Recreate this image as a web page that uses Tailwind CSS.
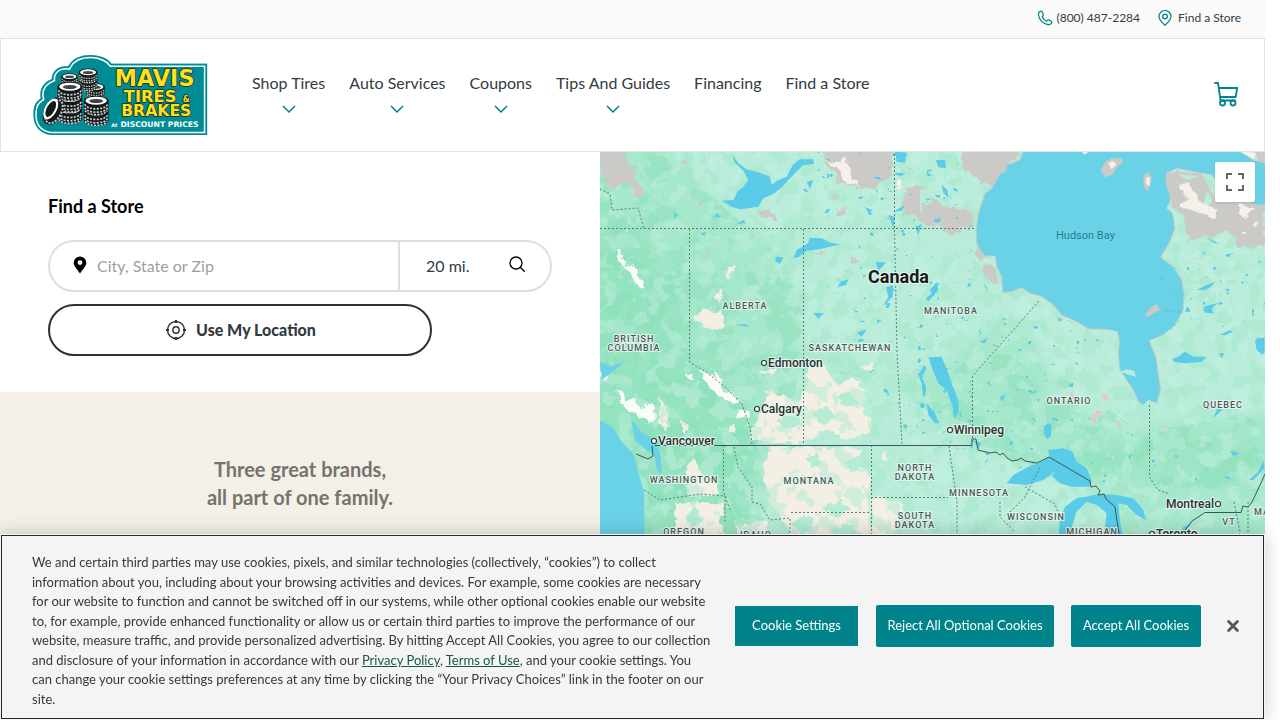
<!DOCTYPE html>
<html lang="en">
<head>
    <meta charset="UTF-8">
    <meta name="viewport" content="width=device-width, initial-scale=1.0">
    <title>Find a Store | Mavis Tires &amp; Brakes</title>
    <script src="https://cdn.jsdelivr.net/npm/@tailwindcss/browser@4"></script>
</head>
<body class="h-screen overflow-hidden bg-white pr-[15px] font-['Lato',sans-serif] text-[#333a40]">
    <div class="flex h-screen flex-col">
        <!-- Top bar -->
        <div class="flex h-[38px] shrink-0 items-center justify-end gap-4 bg-[#fafafa] pr-6 pb-0.5 text-xs">
            <a href="tel:8004872284" class="flex items-center gap-1">
                <svg class="size-4" viewBox="0 0 16 16" fill="none" stroke="#00838a" stroke-width="1.2" stroke-linejoin="round"><path d="M3.6 1.3C2 1.8 1.3 3.2 1.5 5c.6 4.8 4.7 9 9.5 9.6 1.9.2 3.4-.8 3.8-2.3.1-.5-.1-.9-.5-1.1l-2.5-1.3c-.4-.2-.8-.1-1.100.2l-1 1.100c-2.100-.8-3.700-2.500-4.600-4.600l1-.9c.3-.3.4-.7.2-1.100L5 1.700c-.3-.5-.8-.6-1.400-.4z"/></svg>
                (800) 487-2284
            </a>
            <a href="#" class="flex items-center gap-1">
                <svg class="h-4 w-[18px]" viewBox="0 0 18 16" fill="none" stroke="#00838a" stroke-width="1.2"><path d="M9 15.300C6.300 12.600 3 10 3 6.500a6 6 0 0 1 12 0c0 3.500-3.300 6.100-6 8.800z"/><circle cx="9" cy="6.500" r="2.400"/></svg>
                Find a Store
            </a>
        </div>

        <!-- Header -->
        <header class="flex h-[114px] shrink-0 items-center border border-[#e2e2e2] bg-white pr-6 pl-8">
            <a href="#" class="shrink-0">
                <svg class="h-20 w-[175px]" viewBox="99 56 524 240" role="img" aria-label="Mavis Tires and Brakes at discount prices">
                    <defs>
                        <path id="badge" d="M334 82H621V296H150C115 290 98 265 100 230C100 205 110 195 122 186C116 160 130 138 155 128C155 105 175 86 204 90C217 65 245 56 270 56C300 56 325 68 334 82Z"/>
                        <clipPath id="badge-clip"><use href="#badge"/></clipPath>
                        <g id="tire">
                            <path d="M0 10V40C0 62 74 62 74 40V10Z" fill="#16191a"/>
                            <path d="M3 24C8 42 66 42 71 24M3 34C8 52 66 52 71 34M4 43C12 59 62 59 70 43" fill="none" stroke="#c9d2d2" stroke-width="5" stroke-dasharray="6 4"/>
                            <ellipse cx="37" cy="13" rx="37" ry="15" fill="#16191a"/>
                            <ellipse cx="37" cy="13" rx="32" ry="12" fill="#fff"/>
                            <ellipse cx="37" cy="14" rx="21" ry="6" fill="#3d4445"/>
                        </g>
                    </defs>
                    <use href="#badge" fill="#008c95"/>
                    <g clip-path="url(#badge-clip)" fill="none">
                        <use href="#badge" stroke="#fff" stroke-width="20"/>
                        <use href="#badge" stroke="#008c95" stroke-width="11"/>
                    </g>
                    <use href="#tire" transform="translate(258 142) scale(.75)"/>
                    <use href="#tire" transform="translate(236 122) scale(.75)"/>
                    <use href="#tire" transform="translate(236 98) scale(.75)"/>
                    <use href="#tire" transform="translate(184 112) scale(.65)"/>
                    <use href="#tire" transform="translate(172 206)"/>
                    <use href="#tire" transform="translate(172 172)"/>
                    <use href="#tire" transform="translate(172 138)"/>
                    <use href="#tire" transform="translate(251 212)"/>
                    <use href="#tire" transform="translate(251 180)"/>
                    <g transform="rotate(28 157 223)">
                        <ellipse cx="160" cy="223" rx="28" ry="44" fill="#16191a"/>
                        <ellipse cx="162" cy="223" rx="22" ry="38" fill="none" stroke="#c9d2d2" stroke-width="6" stroke-dasharray="6 4"/>
                        <ellipse cx="150" cy="221" rx="18" ry="34" fill="#fff"/>
                        <ellipse cx="150" cy="221" rx="12" ry="26" fill="#16191a"/>
                    </g>
                    <g class="font-['DejaVu_Sans',sans-serif] font-bold" fill="#ffe01a" stroke="#16301f" stroke-width="5" stroke-linejoin="round" paint-order="stroke">
                        <text x="344" y="150" font-size="67">MAVIS</text>
                        <text x="371" y="196" font-size="49">TIRES</text>
                        <text x="548" y="196" font-size="24">&amp;</text>
                        <text x="363" y="240" font-size="47">BRAKES</text>
                    </g>
                    <g class="font-['DejaVu_Sans',sans-serif] font-bold" fill="#fff">
                        <text x="333" y="272" font-size="15">At</text>
                        <text x="361" y="273" font-size="23">DISCOUNT PRICES</text>
                    </g>
                </svg>
            </a>
            <nav class="mb-1 ml-11 flex gap-6 text-base">
                <a href="#" class="flex flex-col items-center gap-2">Shop Tires
                    <svg class="h-3 w-4" viewBox="0 0 16 12" fill="none" stroke="#00838a" stroke-width="1.5"><path d="M2 3l6 6 6-6"/></svg></a>
                <a href="#" class="flex flex-col items-center gap-2">Auto Services
                    <svg class="h-3 w-4" viewBox="0 0 16 12" fill="none" stroke="#00838a" stroke-width="1.5"><path d="M2 3l6 6 6-6"/></svg></a>
                <a href="#" class="flex flex-col items-center gap-2">Coupons
                    <svg class="h-3 w-4" viewBox="0 0 16 12" fill="none" stroke="#00838a" stroke-width="1.5"><path d="M2 3l6 6 6-6"/></svg></a>
                <a href="#" class="flex flex-col items-center gap-2">Tips And Guides
                    <svg class="h-3 w-4" viewBox="0 0 16 12" fill="none" stroke="#00838a" stroke-width="1.5"><path d="M2 3l6 6 6-6"/></svg></a>
                <a href="#">Financing</a>
                <a href="#">Find a Store</a>
            </nav>
            <a href="#" aria-label="Cart" class="ml-auto">
                <svg class="size-7" viewBox="0 0 28 28" fill="none" stroke="#00838a" stroke-width="1.8" stroke-linecap="round" stroke-linejoin="round"><path d="M3 2h3l2.500 17M6.800 7h18.400l-1.500 9H8.200M8.500 19.500h14.500"/><circle cx="10.500" cy="22" r="2.500"/><circle cx="21" cy="22" r="2.500"/></svg>
            </a>
        </header>

        <main class="flex min-h-0 flex-1">
            <section class="flex w-[600px] shrink-0 flex-col">
                <div class="px-12 pt-10 pb-9">
                    <h1 class="text-lg leading-7 font-bold text-black">Find a Store</h1>
                    <form class="mt-5 flex h-[52px] rounded-full border-2 border-[#dedede]">
                        <label for="place" class="flex items-center pb-0.5 pl-[22px]">
                            <svg class="h-[18px] w-4" viewBox="0 0 16 18"><path fill-rule="evenodd" d="M8 .5a6.300 6.300 0 0 0-6.300 6.300C1.700 10.500 6 14 8 17.500c2-3.500 6.300-7 6.300-10.700A6.300 6.300 0 0 0 8 .5zm0 3.700a2.400 2.400 0 1 1 0 4.800 2.400 2.400 0 0 1 0-4.800z"/></svg>
                            <span class="sr-only">Location</span>
                        </label>
                        <input id="place" type="text" placeholder="City, State or Zip" class="min-w-0 flex-1 px-[9px] text-base outline-none placeholder:text-[#9b9fa3]">
                        <div class="flex w-[152px] items-center justify-between border-l-2 border-[#dedede] pr-6 pl-[26px]">
                            <select aria-label="Distance" class="appearance-none text-base outline-none">
                                <option>20 mi.</option>
                                <option>50 mi.</option>
                            </select>
                            <button type="button" aria-label="Search" class="pb-1">
                                <svg class="size-[18px]" viewBox="0 0 18 18" fill="none" stroke="#000" stroke-width="1.3" stroke-linecap="round"><circle cx="8" cy="8" r="6"/><path d="M12.300 12.300l4 4"/></svg>
                            </button>
                        </div>
                    </form>
                    <button type="button" class="mt-3 flex h-[52px] w-96 items-center justify-center gap-2 rounded-full border-2 border-[#2e3236] text-base font-black">
                        <svg class="size-6" viewBox="0 0 24 24" fill="none" stroke="#2e3236" stroke-width="1.4"><circle cx="12" cy="12" r="8.500"/><circle cx="12" cy="12" r="3.200"/><path stroke-width="2.2" d="M12 2v3M12 19v3M2 12h3M19 12h3"/></svg>
                        Use My Location
                    </button>
                </div>
                <div class="flex-1 bg-[#f4f0e8] pt-[63px] text-center text-xl leading-7 font-bold text-[#75736d]">
                    <p>Three great brands,<br>all part of one family.</p>
                </div>
            </section>

            <section class="relative min-w-0 flex-1" aria-label="Map">
                <svg class="h-full w-full" viewBox="0 0 665 568" preserveAspectRatio="xMinYMin slice">
                    <defs>
                        <filter id="coast" x="-5%" y="-5%" width="110%" height="110%">
                            <feTurbulence type="fractalNoise" baseFrequency=".12" numOctaves="3" seed="4"/>
                            <feDisplacementMap in="SourceGraphic" scale="9" xChannelSelector="R" yChannelSelector="G"/>
                        </filter>
                        <!-- these keep only patches of the shape they are set on -->
                        <filter id="patch" x="0" y="0" width="100%" height="100%">
                            <feTurbulence type="fractalNoise" baseFrequency=".03 .04" numOctaves="5" seed="8"/>
                            <feColorMatrix values="0 0 0 0 0  0 0 0 0 0  0 0 0 0 0  16 0 0 0 -8"/>
                            <feComposite in="SourceGraphic" operator="in"/>
                        </filter>
                        <filter id="patch-b" x="0" y="0" width="100%" height="100%">
                            <feTurbulence type="fractalNoise" baseFrequency=".06" numOctaves="4" seed="21"/>
                            <feColorMatrix values="0 0 0 0 0  0 0 0 0 0  0 0 0 0 0  0 16 0 0 -8.5"/>
                            <feComposite in="SourceGraphic" operator="in"/>
                        </filter>
                        <filter id="ponds" x="0" y="0" width="100%" height="100%">
                            <feTurbulence type="fractalNoise" baseFrequency=".12 .14" numOctaves="3" seed="15"/>
                            <feColorMatrix values="0 0 0 0 0  0 0 0 0 0  0 0 0 0 0  20 0 0 0 -14.8"/>
                            <feComposite in="SourceGraphic" operator="in"/>
                        </filter>
                        <filter id="soft" x="-10%" y="-10%" width="120%" height="120%">
                            <feGaussianBlur stdDeviation="7" result="b"/>
                            <feTurbulence type="fractalNoise" baseFrequency=".05" numOctaves="4" seed="4"/>
                            <feDisplacementMap in="b" scale="30" xChannelSelector="R" yChannelSelector="G"/>
                        </filter>
                    </defs>
                    <rect width="665" height="568" fill="#b9edd9"/>

                    <!-- vegetation -->
                    <g filter="url(#soft)">
                        <path fill="#a6e8cc" d="M-20 -20H60L120 60 180 90 205 200 290 225 345 210 400 165 440 200 470 260 540 280 700 250V420H480L520 370 480 330 370 290 290 230 190 215 165 320 -20 400Z"/>
                        <path fill="#94e3c0" d="M-20 60L50 70 60 110 80 130 90 190 110 220 150 250 165 290 140 400 40 410 -20 260Z"/>
                        <path fill="#9be5c5" d="M460 270L540 290 665 280V320L560 330 500 310Z"/>
                    </g>
                    <path fill="#8ce0ba" opacity=".55" filter="url(#patch)" d="M0 0H60L210 130 200 210 330 240 380 195 450 215 540 280 665 260V340L500 330 380 300 290 230 200 215 165 400H0Z"/>
                    <path fill="#c6f0e2" opacity=".45" filter="url(#patch-b)" d="M0 0H665V400H0Z"/>
                    <path fill="#a2e6ca" opacity=".45" filter="url(#patch-b)" transform="translate(665 0) scale(-1 1)" d="M0 0H665V400H0Z"/>

                    <!-- prairie -->
                    <g filter="url(#coast)" fill="#f4efe5">
                        <path d="M208 215L225 208 228 222 240 232 255 225 265 240 262 260 272 268 270 280 245 288 232 278 212 285 200 290 168 292 150 285 160 262 170 240 200 250 205 235Z"/>
                        <path d="M170 295L262 297 258 310 272 325 268 345 270 400H196L185 370 170 350 163 320Z"/>
                        <path d="M85 322L92 308 100 318 118 330 120 342 90 345ZM75 352L100 350 125 352 120 370 128 400H75ZM135 375L165 370 175 400H140Z"/>
                        <path d="M272 345L305 350 298 370 290 390 270 395Z"/>
                        <path d="M92 165L105 157 122 160 125 175 112 178 100 172Z"/>
                        <path d="M118 140L122 135 121 150 116 148Z"/>
                        <path d="M125 118L136 111 135 120 126 125Z"/>
                        <path d="M60 245L66 255 68 280 60 270ZM80 270L90 275 84 280ZM128 275L135 272 134 282ZM260 215L275 212 270 220ZM165 240L172 236 176 244ZM160 220L178 216 172 224ZM180 210L186 206 188 214ZM280 305L286 300 288 312Z"/>
                    </g>
                    <g filter="url(#coast)" fill="#b4ecd5">
                        <path d="M212 262L228 255 236 266 224 272ZM236 244L250 240 258 250 246 256ZM176 268L196 262 204 272 186 278ZM206 306L216 300 222 312 210 316ZM246 310L260 304 264 316 250 320ZM190 372L206 362 216 372 204 384ZM222 356L240 348 252 358 236 366ZM230 378L250 372 262 384 240 390ZM86 362L96 356 102 368 92 376Z"/>
                    </g>
                    <path fill="#aeead0" opacity=".5" filter="url(#patch-b)" d="M60 225L200 220 300 250V400H60Z"/>

                    <!-- tundra -->
                    <g filter="url(#coast)" fill="#cccac6">
                        <path d="M0 -5H22L35 20 43 40 38 45 25 30 12 38 0 22Z"/>
                        <path d="M222 -5H292V25L275 35 262 38 240 30 225 10Z"/>
                        <path d="M305 40L315 32 332 45 345 55 372 58 375 80 390 90 382 110 370 102 365 88 340 80 322 68 300 58Z"/>
                        <path d="M358 -5H425L405 18 392 35 380 30 362 15Z"/>
                        <path d="M385 112L395 115 398 132 388 128 382 120Z"/>
                        <path d="M568 18L600 20 615 45 665 50V95L640 95 630 80 590 88 585 65 572 55 566 30Z"/>
                        <path d="M235 60L247 55 245 65 236 62ZM158 60L170 57 180 70 172 68ZM96 52L102 50 102 55ZM83 8L88 10 84 14ZM250 106L258 104 256 112ZM216 102L226 98 222 104ZM104 102L108 98 107 106ZM230 42L240 44 232 47Z"/>
                    </g>
                    <path fill="#b9edd9" filter="url(#patch)" d="M320 30H385L375 110H320ZM572 22L600 24 612 48 606 60 575 50Z"/>
                    <g filter="url(#coast)" fill="#f5f0e8">
                        <path d="M226 6L236 12 245 5 252 18 250 28 262 35 248 32 240 22Z"/>
                        <path d="M577 30L592 34 600 50 618 58 615 66 596 58 580 56 586 45Z"/>
                        <path d="M638 50L656 56 645 68 640 62ZM650 70L658 68 656 74ZM640 78L646 78 644 82Z"/>
                        <path d="M297 27H301V36H297Z"/>
                    </g>

                    <!-- glaciers -->
                    <g filter="url(#coast)" fill="#fbfbfa">
                        <path d="M18 97L24 108 26 115 34 112 40 125 46 136 40 137 30 122 18 108Z"/>
                        <path d="M17 238L23 240 24 248 33 245 40 258 52 252 56 265 50 273 40 265 28 258 18 250Z"/>
                        <path d="M98 217L108 220 118 230 122 240 135 242 142 250 135 252 120 245 110 235 105 226Z"/>
                        <path d="M115 219L124 228 122 240 116 232Z"/>
                        <path d="M137 258L148 260 149 267 139 264Z"/>
                        <path d="M86 222L94 222 92 229 87 227Z"/>
                        <path d="M1 220L8 222 6 228 1 227Z"/>
                    </g>

                    <!-- sea -->
                    <g fill="#6ad2e7">
                        <path transform="translate(330 -2) scale(.3333)" d="M280 0L270 30 230 45 225 65 210 70 185 115 165 130 145 190 138 240 140 280 150 300 165 318H195L200 350 215 380 218 428 245 425 275 413 300 430 335 440 370 465 395 495 440 515 475 537 530 538 562 545 568 570 565 615 570 660 590 690 610 720 625 755 640 765 655 750 680 760 692 720 685 670 678 620 665 590 658 572 700 555 735 525 760 480 763 430 755 390 730 350 692 322 705 300 720 275 735 235 728 190 710 175 722 150 718 125 708 100 710 70 740 55 790 65 845 75 900 140 980 165H1010V40L970 30 930 0Z" stroke="#cfcbc6" stroke-width="3"/>
                        <path d="M0 268L12 275 22 290 34 303 38 320 44 340 45 400H0Z"/>
                        <path d="M31 267L42 280 53 287 60 300 62 322 57 318 54 302 45 297 35 288Z"/>
                        <path d="M0 210L10 214 25 210 12 220 2 228Z"/>
                    </g>
                    <g transform="translate(330 -2) scale(.3333)">
                        <path fill="#cccac6" d="M512 60L525 35 545 25 575 25 578 38 560 52 550 72 525 82ZM640 75L655 67 665 80 662 105 652 122 642 112ZM645 495L665 470 680 463 690 480 672 490 650 502Z"/>
                        <path fill="#f7f2ea" d="M535 40L548 33 560 42 545 58ZM650 80L660 84 658 110 648 100ZM455 5H475L465 14ZM930 5L980 8 970 28Z"/>
                        <path fill="#cccac6" d="M158 352L178 340 195 355 205 402 185 395 162 375Z"/>
                        <path fill="#cccac6" d="M975 5H1005V38L985 34Z"/>
                        <path fill="#b8ecd8" d="M570 665L590 658 612 662 618 680 590 672Z"/>
                    </g>

                    <!-- lakes -->
                    <g fill="#5bcbea">
                        <g transform="translate(0 -2) scale(.3333)">
                            <path d="M398 15L415 40 440 58 470 65 510 80 515 105 530 92 560 80 578 45 600 28 640 28 642 42 610 45 585 70 545 112 520 132 490 145 475 170 420 178 395 170 365 152 400 150 412 125 430 110 445 90 430 62 402 35Z"/>
                            <path d="M580 325L590 300 625 280 630 263 665 265 690 278 720 283 660 298 620 302 595 322Z"/>
                            <path d="M828 335L858 338 835 362ZM712 412L722 395 745 388 738 405ZM858 412L880 405 878 440 850 468 865 440ZM528 320L550 322 540 342 526 335ZM885 5L920 8 915 38 890 35ZM885 68L915 70 905 78 890 76ZM865 195L885 200 880 235ZM222 185L232 195 225 208ZM410 222L430 210 438 220ZM640 488L672 490 655 506ZM770 548L800 538 785 560ZM408 525L440 522 444 530ZM795 170L815 180 808 195ZM880 185L915 165 905 182ZM620 95L640 90 630 118ZM945 230L965 222 955 255ZM340 200L355 190 360 203ZM300 250L320 247 312 258ZM978 445L1000 425 1010 395 1015 420 985 455Z"/>
                        </g>
                        <g transform="translate(330 -2) scale(.3333)">
                            <path d="M800 420L830 405 855 395 845 408 825 420ZM820 470L865 458 845 475 850 490 825 488ZM870 555L900 540 908 545 885 556ZM18 30L45 30 48 55 25 52ZM35 105L52 120 55 142 40 130ZM765 485L772 468 782 485ZM975 570L1004 562V610L980 600ZM830 262L868 282 850 278Z"/>
                            <path d="M0 420L20 395 24 410 10 440ZM150 575L172 565 165 580ZM160 398L170 410 172 425Z"/>
                        </g>
                        <g transform="translate(330 188) scale(.3333)">
                            <path d="M-5 52L35 50 55 100 65 130 85 180 85 220 72 235 68 200 50 150 25 130 10 95Z"/>
                            <path d="M-18 75L-10 85 -25 110 -12 140 -14 170 -22 165 -24 135 -34 105ZM-10 190L12 215 28 250 15 250 -5 225Z"/>
                            <path d="M230 430L250 405 300 378 330 368 358 350 355 330 400 325 428 335 440 365 470 385 485 420 480 440 425 440 390 430 365 408 375 395 340 420 290 435Z"/>
                            <path d="M385 600L390 540 405 500 440 475 510 462 560 465 610 475 640 510 648 540 620 525 590 495 565 490 570 540 580 600H530L525 560 530 520 500 495 470 485 440 515 425 560 425 600Z"/>
                            <path d="M342 258L355 250 365 255 362 290 350 298 342 280Z"/>
                            <path d="M957 420L985 395 1003 358V385L970 420ZM725 58L745 50 765 35 790 50 830 50 815 65 765 70 735 66ZM760 560L785 550 750 590ZM980 -8L1000 0V45L985 35ZM850 235L865 200 895 190 870 215ZM900 332L930 340 910 348ZM130 300L155 310 145 325ZM868 40L882 40 875 55Z"/>
                        </g>
                    </g>
                    <path fill="#5bcbea" filter="url(#ponds)" d="M190 0H372V120L390 140 500 180 500 270 665 330V180H560V100H665V330H420L300 280 230 140Z"/>
                    <g filter="url(#coast)" fill="#e3c9c8">
                        <path d="M500 245L508 240 507 250ZM493 262L502 258 496 272 492 270ZM517 266L524 272 518 274ZM470 240L478 245 474 248ZM565 272L570 276 566 278Z"/>
                    </g>

                    <!-- borders -->
                    <g fill="none" stroke="#5d7f77" stroke-width="1" stroke-dasharray="2 2">
                        <path d="M0 37L10 42 12 58 38 56 44 77M0 76.500H376M89.500 77V210L106 220 125 235 142 252 150 275 152 292M203.500 77V293M294.500 -2V77L297 200 302 293M372.500 290V224L440 148M549.500 253V325L558 338 570 342"/>
                        <path d="M123.500 293V340L130 358M134 295L138 315 152 335 152 350 160 352 170 368 190 366V410M44 338L60 348 100 342 125 344 125 370M191 360.500H271M271.500 293V410M271 345.500H348M349 294L357 350 357 410M410 360L425 345 440 315M425 335L455 352 460 366M400 350V365L415 380M648 350V410M634 350L640 380 635 400"/>
                    </g>
                    <g fill="none" stroke="#35595e" stroke-width="1">
                        <path d="M36 302L48 307 53 304 52 294M55 293.500H372V287H376L378 298 390 301 396 300 400 303 403 301 407 306 412 309 418 308 421 306 425 309 437 311 449 305 490 329 491 335 496 334 500 339 498 343 504 342 506 347 515 355 519 382M584 380L592 369 605 360.500H641L643 354 648 355 652 350 660 333 665 322"/>
                    </g>

                    <!-- places -->
                    <g class="font-['Roboto',sans-serif]" stroke="#e4f7ef" stroke-width="2" stroke-linejoin="round" paint-order="stroke">
                        <text x="268" y="131" font-size="18" font-weight="700" fill="#17191a">Canada</text>
                        <g font-size="12" font-weight="500" fill="#2b2f31">
                            <text x="168" y="215">Edmonton</text>
                            <text x="161" y="261">Calgary</text>
                            <text x="58" y="293">Vancouver</text>
                            <text x="354" y="282">Winnipeg</text>
                            <text x="566" y="356">Montreal</text>
                            <text x="556" y="386">Toronto</text>
                        </g>
                        <g class="tracking-[1px]" font-size="9" font-weight="500" fill="#4b5755" text-anchor="middle">
                            <text x="145" y="157">ALBERTA</text>
                            <text x="34" y="190">BRITISH</text>
                            <text x="34" y="199">COLUMBIA</text>
                            <text x="250" y="199">SASKATCHEWAN</text>
                            <text x="351" y="162">MANITOBA</text>
                            <text x="469" y="252">ONTARIO</text>
                            <text x="623" y="256">QUEBEC</text>
                            <text x="84" y="331">WASHINGTON</text>
                            <text x="209" y="332">MONTANA</text>
                            <text x="315" y="319">NORTH</text>
                            <text x="315" y="328">DAKOTA</text>
                            <text x="315" y="367">SOUTH</text>
                            <text x="315" y="376">DAKOTA</text>
                            <text x="379" y="344">MINNESOTA</text>
                            <text x="436" y="368">WISCONSIN</text>
                            <text x="492" y="383">MICHIGAN</text>
                            <text x="84" y="383">OREGON</text>
                            <text x="156" y="386">IDAHO</text>
                            <text x="629" y="373">VT</text>
                            <text x="662" y="363">MA</text>
                        </g>
                    </g>
                    <text x="456" y="87" font-size="11" class="font-['Roboto',sans-serif]" fill="#21808e">Hudson Bay</text>
                    <g fill="#fff" stroke="#2b2f31" stroke-width="1.1">
                        <circle cx="164" cy="211" r="2.500"/><circle cx="157" cy="257" r="2.500"/><circle cx="54" cy="289" r="2.500"/><circle cx="350" cy="278" r="2.500"/><circle cx="618" cy="352" r="2.500"/><circle cx="552" cy="382" r="2.500"/>
                    </g>
                </svg>
                <button type="button" aria-label="Toggle fullscreen view" class="absolute top-2.5 right-2.5 flex size-10 items-center justify-center rounded-xs bg-white shadow">
                    <svg class="size-[18px]" viewBox="0 0 18 18" fill="#666"><path d="M0 0v6h2V2h4V0H0zm16 0h-4v2h4v4h2V0h-2zm0 16h-4v2h6v-6h-2v4zM2 12H0v6h6v-2H2v-4z"/></svg>
                </button>
            </section>
        </main>
    </div>

    <!-- Cookie notice -->
    <div role="dialog" aria-label="Cookie notice" class="fixed right-[15px] bottom-0 left-0 bg-[#f4f4f4] p-px shadow-[0_0_18px_rgba(0,0,0,0.2)]">
        <div class="flex items-center border border-[#25282d] pr-6 pl-[30px]">
            <p class="w-[690px] shrink-0 pt-[17px] pb-[9px] text-[13px] leading-normal">We and certain third parties may use cookies, pixels, and similar technologies (collectively, “cookies”) to collect<br>information about you, including about your browsing activities and devices. For example, some cookies are necessary<br>for our website to function and cannot be switched off in our systems, while other optional cookies enable our website<br>to, for example, provide enhanced functionality or allow us or certain third parties to improve the performance of our<br>website, measure traffic, and provide personalized advertising. By hitting Accept All Cookies, you agree to our collection<br>and disclosure of your information in accordance with our <a href="#" class="text-[#17584b] underline">Privacy Policy</a>, <a href="#" class="text-[#17584b] underline">Terms of Use</a>, and your cookie settings. You<br>can change your cookie settings preferences at any time by clicking the “Your Privacy Choices” link in the footer on our<br>site.</p>
            <div class="ml-auto flex items-center pb-0.5 text-[13px] text-white">
                <button type="button" class="h-10 w-[123px] bg-[#00838a]">Cookie Settings</button>
                <button type="button" class="ml-[18px] h-[42px] w-[178px] rounded-xs bg-[#00838a]">Reject All Optional Cookies</button>
                <button type="button" class="ml-[17px] h-[42px] w-[130px] rounded-xs bg-[#00838a]">Accept All Cookies</button>
                <button type="button" aria-label="Close" class="ml-[26px]">
                    <svg class="size-3" viewBox="0 0 12 12" stroke="#565656" stroke-width="2.8" stroke-linecap="round"><path d="M1.600 1.600l8.800 8.800M10.400 1.600l-8.800 8.800"/></svg>
                </button>
            </div>
        </div>
    </div>
</body>
</html>
